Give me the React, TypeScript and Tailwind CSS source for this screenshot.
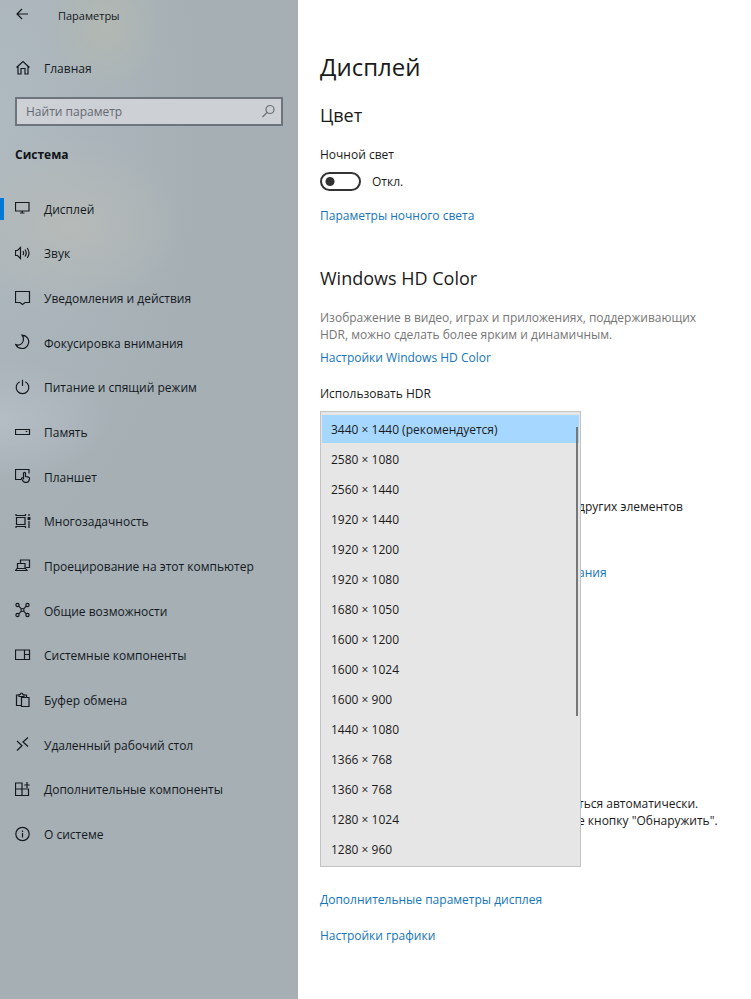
import { useState } from 'react'
import type { ReactNode } from 'react'

interface NavItem {
  label: string
  icon: ReactNode
}

const navItems: NavItem[] = [
  {
    label: 'Дисплей',
    icon: (
      <>
        <path d="M.5 2.500h13.500v8.500H.5z" />
        <path d="M7.200 11v2M5 13h4.500" />
      </>
    ),
  },
  {
    label: 'Звук',
    icon: (
      <>
        <path d="M.5 5.500h2l3-3v11l-3-3h-2z" />
        <path d="M8 6q1.200 2 0 4M10 4.500q2.400 3.500 0 7M12.200 3q3.600 5 0 10" />
      </>
    ),
  },
  {
    label: 'Уведомления и действия',
    icon: <path d="M.5 1.500h14v11H10l-2.500 2-2.500-2H.5z" />,
  },
  {
    label: 'Фокусировка внимания',
    icon: <path d="M7 1.200c5 .4 7.300 4 6.600 7.800-.8 4-4.200 6-7.600 5.400-2.400-.4-4.400-2-5.200-3.700 3 .8 6-.3 7.200-3.300.8-2.200.3-4.600-1-6.200z" />,
  },
  {
    label: 'Питание и спящий режим',
    icon: (
      <>
        <path d="M4.700 2.700a6.300 6.300 0 1 0 5.600 0" />
        <path d="M7.500 .8v6.200" />
      </>
    ),
  },
  {
    label: 'Память',
    icon: (
      <>
        <path d="M.5 5.500h14v5H.5z" />
        <path d="M10.700 7.500h1.600" />
      </>
    ),
  },
  {
    label: 'Планшет',
    icon: (
      <>
        <path d="M6 11.500H.5v-10H14v4" />
        <path d="M8.500 10.500V5.300q0-1 1-1t1 1v3.200l3 .6q1.200.3 1 1.400l-.5 2q-.5 1.900-2.200 1.900h-1.500q-1.200 0-2-1L6.500 11q-.3-1 .7-1.200.8 0 1.300.7z" />
      </>
    ),
  },
  {
    label: 'Многозадачность',
    icon: (
      <>
        <path d="M1.500 4.500h8.500v7H1.500z" />
        <path d="M.5 2.500H11M.5 13.500H11M1 1v1.500M10.500 1v1.500M1 13.500V15M10.500 13.500V15M14 1v2M14 8v7" />
        <path d="M13.200 4.700h1.600v1.600h-1.600z" fill="currentColor" />
      </>
    ),
  },
  {
    label: 'Проецирование на этот компьютер',
    icon: (
      <>
        <path d="M5.500 5.500V2h9v7.500h-4" />
        <path d="M2.500 5.500h7.500v5H2.500zM.5 12.500H12l-1.500-2H2z" />
      </>
    ),
  },
  {
    label: 'Общие возможности',
    icon: (
      <>
        <circle cx="2.500" cy="3" r="1.600" />
        <circle cx="12.500" cy="3" r="1.600" />
        <circle cx="2.500" cy="13" r="1.600" />
        <circle cx="12.500" cy="13" r="1.600" />
        <circle cx="7.500" cy="8" r="1.500" />
        <path d="M3.700 4.200l2.700 2.700M11.300 4.200L8.600 6.900M3.700 11.800l2.700-2.700M11.300 11.800L8.600 9.100" />
      </>
    ),
  },
  {
    label: 'Системные компоненты',
    icon: (
      <>
        <path d="M.5 3h14v9.500H.5z" />
        <path d="M9.500 3v9.500M9.500 7.500h5" />
      </>
    ),
  },
  {
    label: 'Буфер обмена',
    icon: (
      <>
        <path d="M6 13.500H1.500V3H4M9.500 3h2v2.500" />
        <path d="M4 4.500V2.500h1.200q.2-1.500 1.300-1.500t1.300 1.500H9v2z" />
        <path d="M6.500 5.500h7.500v9H6.500z" />
      </>
    ),
  },
  {
    label: 'Удаленный рабочий стол',
    icon: <path d="M2 5l5 4.700-5 4.800M13 1.500L8 6l5 4.500" />,
  },
  {
    label: 'Дополнительные компоненты',
    icon: (
      <>
        <path d="M.5 2h6.500v12.500H.5zM.5 8H13.500v6.500H7" />
        <path d="M12 1v6M9.300 4h5.400" />
      </>
    ),
  },
  {
    label: 'О системе',
    icon: (
      <>
        <circle cx="7.500" cy="8" r="6.700" />
        <path d="M7.500 7v4.500M7.500 4.500V6" />
      </>
    ),
  },
]

const resolutions = [
  '3440 × 1440 (рекомендуется)',
  '2580 × 1080',
  '2560 × 1440',
  '1920 × 1440',
  '1920 × 1200',
  '1920 × 1080',
  '1680 × 1050',
  '1600 × 1200',
  '1600 × 1024',
  '1600 × 900',
  '1440 × 1080',
  '1366 × 768',
  '1360 × 768',
  '1280 × 1024',
  '1280 × 960',
]

function Icon({ children }: { children: ReactNode }) {
  return (
    <svg
      viewBox="0 0 16 16"
      className="mb-[2px] h-4 w-4 shrink-0"
      fill="none"
      stroke="currentColor"
      strokeWidth="1.2"
      aria-hidden="true"
    >
      {children}
    </svg>
  )
}

function Sidebar() {
  const [active, setActive] = useState('Дисплей')

  return (
    <aside className="w-[298px] shrink-0 bg-[#a5afb4] bg-[radial-gradient(ellipse_60px_70px_at_105px_25px,#b2b8b2,transparent),radial-gradient(ellipse_120px_90px_at_70px_225px,#b6bab8,transparent),radial-gradient(ellipse_110px_60px_at_0px_420px,#b5bdc4,transparent),radial-gradient(ellipse_200px_420px_at_0px_120px,#afbac0,transparent)] text-[#14191e]">
      <header className="flex h-[30px] items-center gap-[27px] pl-[15px] text-[11px]">
        <button aria-label="Назад">
          <Icon>
            <path d="M13 8H2M7 3L2 8l5 5" />
          </Icon>
        </button>
        <span>Параметры</span>
      </header>

      <a href="#home" className="mt-[29px] flex h-[18px] items-center gap-[13px] pl-[15px]">
        <Icon>
          <path d="M1.500 8.500L8 2.500l6.500 6M3 7.500V15h3V9.500h4V15h3V7.500" />
        </Icon>
        Главная
      </a>

      <label className="mx-[15px] mt-5 flex h-[29px] items-center border-2 border-[#6d747b] bg-[#cdd0d5] pr-[5px] pl-[9px] text-[#6a7077]">
        <input
          type="text"
          placeholder="Найти параметр"
          aria-label="Найти параметр"
          className="min-w-0 flex-1 bg-transparent outline-none placeholder:text-[#646a71]"
        />
        <Icon>
          <circle cx="10" cy="6.500" r="4" />
          <path d="M7 9.500L2.500 14" />
        </Icon>
      </label>

      <h2 className="mt-5 pl-[15px] font-bold text-[#101418]">Система</h2>

      <nav className="mt-6 grid min-h-[670px] auto-rows-fr">
        {navItems.map((item) => (
          <button
            key={item.label}
            onClick={() => setActive(item.label)}
            className="flex items-center text-left"
          >
            <span className={`h-[22px] w-1 ${active === item.label ? 'bg-[#0078d7]' : ''}`} />
            <span className="flex items-center gap-[13px] pl-[11px]">
              <Icon>{item.icon}</Icon>
              {item.label}
            </span>
          </button>
        ))}
      </nav>
    </aside>
  )
}

function TextLink({ children, className = '' }: { children: ReactNode; className?: string }) {
  return (
    <a href="#settings" className={`block text-[#1475ba] ${className}`}>
      {children}
    </a>
  )
}

export default function App() {
  const [nightLight, setNightLight] = useState(false)
  const [resolution, setResolution] = useState(resolutions[0])

  return (
    <div className="flex min-h-screen bg-white font-['Open_Sans','Noto_Sans',sans-serif] text-xs leading-[17px] text-[#1a1a1a]">
      <Sidebar />

      <main className="min-w-0 flex-1 pt-[49px] pl-[22px]">
        <h1 className="text-2xl leading-9">Дисплей</h1>

        <h2 className="mt-[18px] text-lg leading-6">Цвет</h2>
        <label htmlFor="night-light" className="mt-[19px] block">
          Ночной свет
        </label>
        <div className="mt-2 flex h-5 items-center gap-[11px]">
          <input
            id="night-light"
            type="checkbox"
            role="switch"
            checked={nightLight}
            onChange={(e) => setNightLight(e.target.checked)}
            className="h-[19px] w-[41px] appearance-none rounded-full border-2 border-[#333] bg-[radial-gradient(circle_at_8px_50%,#333_4px,transparent_5px)] checked:bg-[radial-gradient(circle_at_29px_50%,#333_4px,transparent_5px)]"
          />
          <span>{nightLight ? 'Вкл.' : 'Откл.'}</span>
        </div>
        <TextLink className="mt-4">Параметры ночного света</TextLink>

        <h2 className="mt-[42px] text-lg leading-6">Windows HD Color</h2>
        <p className="mt-[19px] max-w-[400px] text-[#767676]">
          Изображение в видео, играх и приложениях, поддерживающих HDR, можно сделать более ярким и
          динамичным.
        </p>
        <TextLink className="mt-[6px]">Настройки Windows HD Color</TextLink>
        <label htmlFor="resolution" className="mt-[19px] block">
          Использовать HDR
        </label>

        {/* Open resolution list lies over the page text */}
        <div className="relative mt-[9px]">
          <div className="h-[456px] pt-[87px] pl-[258px]">
            <p>других элементов</p>
            <TextLink className="mt-[49px]">ания</TextLink>
            <p className="mt-[214px]">ться автоматически.</p>
            <p>е кнопку "Обнаружить".</p>
          </div>
          <select
            id="resolution"
            size={15}
            value={resolution}
            onChange={(e) => setResolution(e.target.value)}
            className="absolute top-0 left-0 h-[456px] w-[261px] overflow-hidden border border-[#c3c3c3] bg-[#e6e6e6] px-px pt-[3px] outline-none"
          >
            {resolutions.map((r) => (
              <option
                key={r}
                value={r}
                className="mb-[2px] h-7 px-[9px] py-[6px] text-[#1a1a1a] checked:bg-[#a6d8ff]"
              >
                {r}
              </option>
            ))}
          </select>
          <div className="absolute top-4 left-[256px] h-[289px] w-[2px] bg-[#777]" />
        </div>

        <TextLink className="mt-6">Дополнительные параметры дисплея</TextLink>
        <TextLink className="mt-[19px]">Настройки графики</TextLink>
      </main>
    </div>
  )
}
